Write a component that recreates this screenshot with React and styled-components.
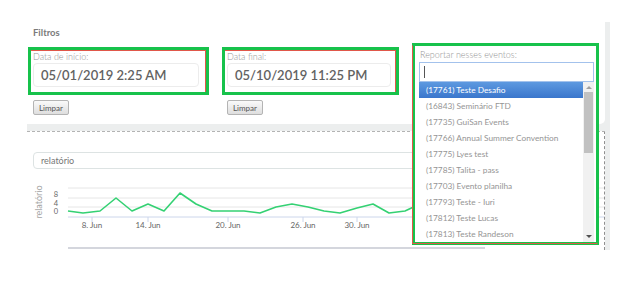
import React from "react";
import styled, { createGlobalStyle } from "styled-components";

const GlobalStyle = createGlobalStyle`
  body {
    margin: 0;
    background: #fff;
    font-family: Lato, "Open Sans", Arial, sans-serif;
  }
`;

const events = [
  "(17761) Teste Desafio",
  "(16843) Seminário FTD",
  "(17735) GuiSan Events",
  "(17766) Annual Summer Convention",
  "(17775) Lyes test",
  "(17785) Talita - pass",
  "(17703) Evento planilha",
  "(17793) Teste - Iuri",
  "(17812) Teste Lucas",
  "(17813) Teste Randeson",
];

const points = [
  [35, 36], [50, 38], [67, 36], [83, 23], [99, 36], [115, 29], [131, 36],
  [147, 18], [163, 29], [179, 36], [195, 36], [211, 36], [227, 38],
  [243, 32], [259, 29], [275, 32], [291, 36], [307, 38], [324, 33],
  [340, 29], [356, 38], [372, 36], [387, 29], [403, 36], [419, 33],
  [435, 36], [451, 36], [467, 29], [483, 36], [499, 36], [515, 33],
  [531, 36], [547, 36],
];

const ticks = [
  { x: 59, label: "8. Jun" },
  { x: 115, label: "14. Jun" },
  { x: 195, label: "20. Jun" },
  { x: 270, label: "26. Jun" },
  { x: 324, label: "30. Jun" },
];

const App = () => {
  return (
    <>
      <GlobalStyle />
      <Page>
        <Frame>
          <FilterCard>
            <SectionTitle>Filtros</SectionTitle>
            <FilterRow>
              <FilterGroup $offset={4}>
                <AnnotBox $w={181} $pad={2}>
                  <FieldLabel>Data de início:</FieldLabel>
                  <DateInput $w={166}>05/01/2019 2:25 AM</DateInput>
                </AnnotBox>
                <ClearButton>Limpar</ClearButton>
              </FilterGroup>
              <FilterGroup $offset={4}>
                <AnnotBox $w={177} $pad={2}>
                  <FieldLabel>Data final:</FieldLabel>
                  <DateInput $w={164}>05/10/2019 11:25 PM</DateInput>
                </AnnotBox>
                <ClearButton>Limpar</ClearButton>
              </FilterGroup>
              <FilterGroup $offset={0}>
                <EventBox>
                  <FieldLabel>Reportar nesses eventos:</FieldLabel>
                  <SearchInput>
                    <Caret />
                  </SearchInput>
                  <ListWrap>
                    <EventList>
                      {events.map((ev, i) => (
                        <EventItem key={ev} $active={i === 0}>
                          {ev}
                        </EventItem>
                      ))}
                    </EventList>
                    <ScrollTrack>
                      <Arrow $up />
                      <Thumb />
                      <Arrow />
                    </ScrollTrack>
                  </ListWrap>
                </EventBox>
              </FilterGroup>
            </FilterRow>
          </FilterCard>
          <ReportPanel>
            <SelectBox>relatório</SelectBox>
            <ChartSvg width="572" height="75" viewBox="0 0 572 75">
              <text
                x="7"
                y="27"
                transform="rotate(-90 7 27)"
                textAnchor="middle"
                dominantBaseline="middle"
                fontSize="9"
                fill="#a3a3a3"
              >
                relatório
              </text>
              {[13, 23, 32].map((y) => (
                <line key={y} x1="35" x2="572" y1={y} y2={y} stroke="#e6e6e6" strokeWidth="1" />
              ))}
              <text x="25" y="22" textAnchor="end" fontSize="7.5" fill="#666">8</text>
              <text x="25" y="30.5" textAnchor="end" fontSize="7.5" fill="#666">4</text>
              <text x="25" y="39" textAnchor="end" fontSize="7.5" fill="#666">0</text>
              <line x1="35" x2="572" y1="42" y2="42" stroke="#ccd6eb" strokeWidth="1" />
              {ticks.map((t) => (
                <g key={t.label}>
                  <line x1={t.x} x2={t.x} y1="42" y2="47" stroke="#ccd6eb" strokeWidth="1" />
                  <text x={t.x} y="53" textAnchor="middle" fontSize="8" fill="#666">
                    {t.label}
                  </text>
                </g>
              ))}
              <polyline
                points={points.map((p) => p.join(",")).join(" ")}
                fill="none"
                stroke="#34d173"
                strokeWidth="1.6"
                strokeLinejoin="round"
              />
              <line x1="35" x2="452" y1="73" y2="73" stroke="#c6c8d2" strokeWidth="1.5" />
            </ChartSvg>
          </ReportPanel>
        </Frame>
      </Page>
    </>
  );
};

const Page = styled.div`
  padding: 22px 0 0 27px;
  width: 643px;
  height: 285px;
  box-sizing: border-box;
`;

const Frame = styled.div`
  width: 583px;
  height: 228px;
  background: #eceeee;
  padding-right: 5px;
  box-sizing: border-box;
  display: flex;
  flex-direction: column;
`;

const FilterCard = styled.div`
  position: relative;
  z-index: 2;
  height: 102px;
  flex-shrink: 0;
  background: #fff;
  border-bottom-right-radius: 5px;
  padding: 5px 0 0 1px;
  box-sizing: border-box;
`;

const SectionTitle = styled.div`
  font-size: 9.5px;
  line-height: 12px;
  font-weight: 700;
  color: #7b7b7b;
  padding-left: 5px;
`;

const FilterRow = styled.div`
  display: flex;
  align-items: flex-start;
  gap: 13px;
  margin-top: 4px;
`;

const FilterGroup = styled.div`
  display: flex;
  flex-direction: column;
  align-items: flex-start;
  margin-top: ${(p) => p.$offset}px;
`;

const AnnotBox = styled.div`
  width: ${(p) => p.$w}px;
  box-sizing: border-box;
  border: 3px solid #17c24b;
  box-shadow: inset -1px 1px 0 #e0574a;
  padding: 1px 0 5px ${(p) => p.$pad}px;
`;

const FieldLabel = styled.div`
  font-size: 9px;
  line-height: 11px;
  color: #959595;
  font-weight: 300;
  white-space: nowrap;
`;

const DateInput = styled.div`
  width: ${(p) => p.$w}px;
  height: 24px;
  box-sizing: border-box;
  margin-top: 1px;
  border: 1px solid #ececec;
  border-radius: 4px;
  padding-left: 7px;
  font-size: 13px;
  line-height: 22px;
  font-weight: 600;
  color: #626262;
  white-space: nowrap;
`;

const ClearButton = styled.button`
  margin-top: 5px;
  margin-left: 5px;
  width: 36px;
  height: 15px;
  padding: 0;
  border: 1px solid #b4b4b4;
  border-radius: 2px;
  background: linear-gradient(#fafafa, #dedede);
  font-family: Lato, Arial, sans-serif;
  font-size: 8px;
  color: #555;
`;

const EventBox = styled.div`
  position: relative;
  width: 187px;
  height: 202px;
  box-sizing: border-box;
  border: 3px solid #17c24b;
  background: #fff;
  padding: 3px 0 0 5px;

  &::after {
    content: "";
    position: absolute;
    left: -3px;
    top: -1px;
    right: -2px;
    bottom: -2px;
    border: 1px solid #e0574a;
    border-top-color: transparent;
    border-right-color: transparent;
    pointer-events: none;
  }

  ${FieldLabel} {
    line-height: 12px;
  }
`;

const SearchInput = styled.div`
  width: 175px;
  height: 20px;
  box-sizing: border-box;
  margin: 1px 0 0 -1px;
  border: 1px solid #a3c2ec;
  background: #fff;
  display: flex;
  align-items: center;
  padding-left: 4px;
`;

const Caret = styled.span`
  width: 1px;
  height: 12px;
  background: #555;
`;

const ListWrap = styled.div`
  display: flex;
  width: 175px;
  height: 160px;
  margin-left: -1px;
  overflow: hidden;
`;

const EventList = styled.div`
  flex: 1;
  display: flex;
  flex-direction: column;
`;

const EventItem = styled.div`
  flex-shrink: 0;
  height: 16px;
  line-height: 16px;
  padding-left: 7px;
  font-size: 8.3px;
  white-space: nowrap;
  color: ${(p) => (p.$active ? "#fff" : "#959595")};
  background: ${(p) => (p.$active ? "linear-gradient(#5d99e0, #3a76cc)" : "transparent")};
`;

const ScrollTrack = styled.div`
  width: 11px;
  background: #f1f1f1;
  display: flex;
  flex-direction: column;
  align-items: center;
  justify-content: space-between;
  padding: 4px 0;
  box-sizing: border-box;
  position: relative;
`;

const Arrow = styled.span`
  width: 0;
  height: 0;
  border-left: 3px solid transparent;
  border-right: 3px solid transparent;
  ${(p) => (p.$up ? "border-bottom: 3px solid #a0a0a0;" : "border-top: 3px solid #505050;")}
`;

const Thumb = styled.div`
  position: absolute;
  top: 10px;
  left: 1px;
  width: 9px;
  height: 61px;
  background: #c1c1c1;
`;

const ReportPanel = styled.div`
  flex: 1;
  margin-top: 7px;
  background: #fff;
  border-top: 1px dashed #b3b3b3;
  border-right: 1px dashed #8f8f8f;
  padding: 20px 0 0 6px;
  box-sizing: border-box;
  overflow: hidden;
`;

const SelectBox = styled.div`
  width: 560px;
  height: 17px;
  box-sizing: border-box;
  border: 1px solid #dde3e3;
  border-radius: 4px;
  padding-left: 7px;
  font-size: 9px;
  line-height: 15px;
  color: #777;
`;

const ChartSvg = styled.svg`
  display: block;
  margin-top: 6px;
  font-family: Lato, Arial, sans-serif;
`;

export default App;
